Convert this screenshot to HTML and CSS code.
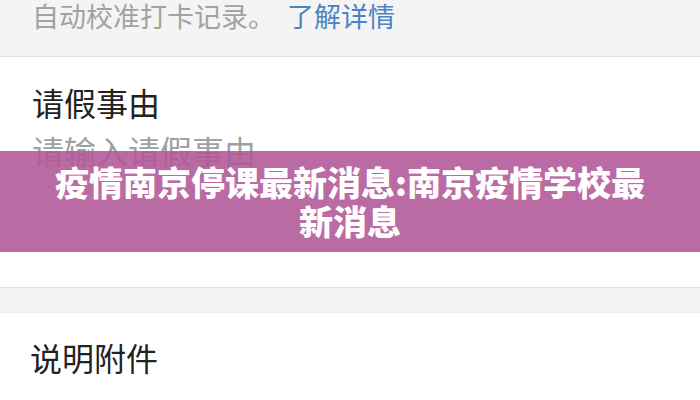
FILE: index.html
```html
<!DOCTYPE html>
<html lang="zh">
<head>
<meta charset="utf-8">
<link rel="stylesheet" href="styles.css">
</head>
<body>
<div class="page">
  <div class="notice">
    <span class="notice-text">自动校准打卡记录。</span><span class="link">了解详情</span>
  </div>
  <div class="section reason">
    <div class="label">请假事由</div>
    <div class="placeholder">请输入请假事由</div>
  </div>
  <div class="gap"></div>
  <div class="section attach">
    <div class="label">说明附件</div>
  </div>
  <div class="banner">
    <div class="title">疫情南京停课最新消息:南京疫情学校最<br>新消息</div>
  </div>
</div>
</body>
</html>
```

FILE: styles.css
```css
html, body {
  margin: 0;
  padding: 0;
  background: #ffffff;
}
.page {
  position: relative;
  width: 700px;
  height: 400px;
  overflow: hidden;
  font-family: "Noto Sans CJK SC", "Noto Sans", sans-serif;
}
.notice {
  background: #f4f4f4;
  height: 57px;
  border-bottom: 1px solid #e0e0e0;
  box-sizing: border-box;
  padding-left: 32px;
  font-size: 27px;
  line-height: 32px;
  white-space: nowrap;
}
.notice-text {
  color: #a2a2a2;
}
.link {
  color: #4a84c2;
  margin-left: 12px;
}
.section {
  background: #ffffff;
  padding-left: 32px;
}
.reason {
  height: 230px;
  box-sizing: border-box;
  padding-top: 27px;
}
.label {
  font-size: 32px;
  line-height: 36px;
  color: #222222;
}
.placeholder {
  font-size: 32px;
  line-height: 36px;
  color: #a0a0a0;
  margin-top: 12px;
}
.gap {
  height: 24px;
  background: #f4f4f4;
  border-top: 1px solid #e2e2e2;
  border-bottom: 1px solid #ececec;
}
.attach {
  padding-top: 26px;
  padding-left: 30px;
}
.banner {
  position: absolute;
  left: 0;
  top: 151px;
  width: 700px;
  height: 101px;
  background: rgba(177, 87, 150, 0.88);
  display: flex;
  align-items: center;
  justify-content: center;
}
.title {
  color: #ffffff;
  font-weight: 900;
  font-size: 34px;
  line-height: 39px;
  text-align: center;
  margin-top: -2px;
}
```
